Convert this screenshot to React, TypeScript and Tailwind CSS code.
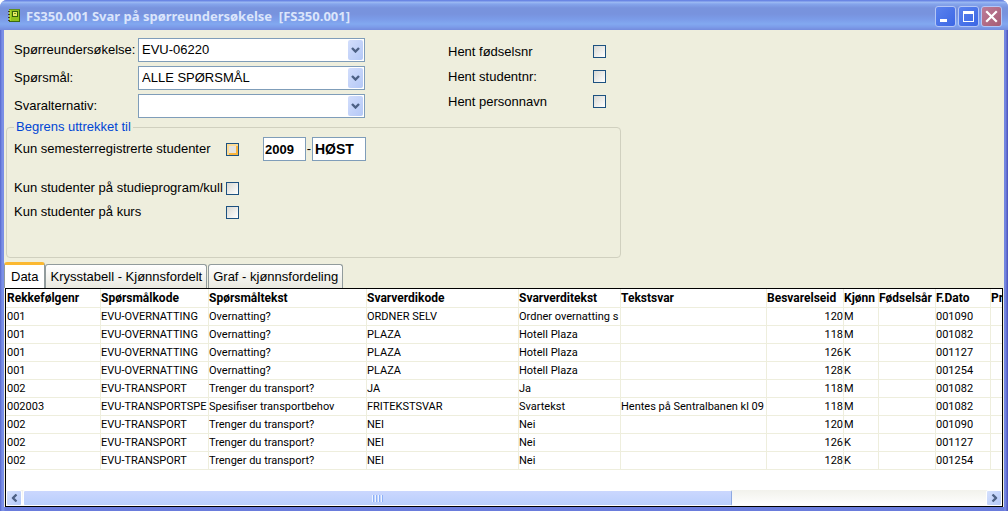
import React, { useState } from "react";

const columns = [
  { name: "Rekkefølgenr", width: "w-[95px]" },
  { name: "Spørsmålkode", width: "w-[108px]" },
  { name: "Spørsmåltekst", width: "w-[158px]" },
  { name: "Svarverdikode", width: "w-[152px]" },
  { name: "Svarverditekst", width: "w-[102px]" },
  { name: "Tekstsvar", width: "w-[146px]" },
  { name: "Besvarelseid", width: "w-[77px]" },
  { name: "Kjønn", width: "w-[35px]" },
  { name: "Fødselsår", width: "w-[57px]" },
  { name: "F.Dato", width: "w-[55px]" },
  { name: "Pr", width: "" },
];

const rows = [
  ["001", "EVU-OVERNATTING", "Overnatting?", "ORDNER SELV", "Ordner overnatting s", "", "120", "M", "", "001090", ""],
  ["001", "EVU-OVERNATTING", "Overnatting?", "PLAZA", "Hotell Plaza", "", "118", "M", "", "001082", ""],
  ["001", "EVU-OVERNATTING", "Overnatting?", "PLAZA", "Hotell Plaza", "", "126", "K", "", "001127", ""],
  ["001", "EVU-OVERNATTING", "Overnatting?", "PLAZA", "Hotell Plaza", "", "128", "K", "", "001254", ""],
  ["002", "EVU-TRANSPORT", "Trenger du transport?", "JA", "Ja", "", "118", "M", "", "001082", ""],
  ["002003", "EVU-TRANSPORTSPE", "Spesifiser transportbehov", "FRITEKSTSVAR", "Svartekst", "Hentes på Sentralbanen kl 09", "118", "M", "", "001082", ""],
  ["002", "EVU-TRANSPORT", "Trenger du transport?", "NEI", "Nei", "", "120", "M", "", "001090", ""],
  ["002", "EVU-TRANSPORT", "Trenger du transport?", "NEI", "Nei", "", "126", "K", "", "001127", ""],
  ["002", "EVU-TRANSPORT", "Trenger du transport?", "NEI", "Nei", "", "128", "K", "", "001254", ""],
];

const tabs = ["Data", "Krysstabell - Kjønnsfordelt", "Graf - kjønnsfordeling"];

function TitleBar() {
  const button =
    "size-[21px] rounded-[3px] border border-[#b4c6f6] flex items-center justify-center";
  return (
    <div className="h-[30px] shrink-0 flex items-center pl-2 pr-[6px] pt-[2px] bg-[linear-gradient(#6a86e4_0px,#6a86e4_1px,#9fbcf3_2px,#85a5ec_4px,#7893dd_8px,#7893de_14px,#7b9be8_19px,#82a8f0_24px,#7c9ce9_27px,#748bdd_30px)]">
      <svg width="13" height="14" viewBox="0 0 13 14" shapeRendering="crispEdges">
        <path d="M1 0h11v1H1z" fill="#5f8d1c" />
        <path d="M1 1h10v11H1z" fill="#8fc21e" />
        <path d="M1 1h2v11H1z" fill="#a9d62c" />
        <path d="M11 1h1v12H11zM1 12h10v1H1z" fill="#3a6a12" />
        <path d="M4 2h6v6H4z" fill="#33630c" />
        <path d="M5 3h4v4H5z" fill="#e9ec62" />
        <path d="M6 4h2v1H6z" fill="#6d9a20" />
        <path d="M0 2h2v1H0zM0 5h2v1H0zM0 8h2v1H0zM0 11h2v1H0z" fill="#4c3f1a" />
      </svg>
      <h1 className="flex-1 pl-[5px] text-[13px] leading-4 font-bold text-[#dbe5fb] whitespace-pre font-['Noto_Sans','Open_Sans',sans-serif]">
        FS350.001 Svar på spørreundersøkelse{"  "}[FS350.001]
      </h1>
      <div className="flex gap-[2px]">
        <button aria-label="Minimer" className={`${button} bg-linear-to-br from-[#5a82ee] to-[#3c66e4]`}>
          <svg width="19" height="19" viewBox="0 0 19 19">
            <path d="M4 12h7v3H4z" fill="#fff" />
          </svg>
        </button>
        <button aria-label="Maksimer" className={`${button} bg-linear-to-br from-[#5a82ee] to-[#3c66e4]`}>
          <svg width="19" height="19" viewBox="0 0 19 19">
            <path d="M4 4h11v11H4zM5 7v7h9V7z" fill="#fff" fillRule="evenodd" />
          </svg>
        </button>
        <button aria-label="Lukk" className={`${button} bg-linear-to-br from-[#bd7c98] to-[#a75c74]`}>
          <svg width="19" height="19" viewBox="0 0 19 19">
            <path d="M5 5l9 9M14 5l-9 9" stroke="#fff" strokeWidth="2.2" strokeLinecap="square" />
          </svg>
        </button>
      </div>
    </div>
  );
}

function Chevron({ className }: { className?: string }) {
  return (
    <svg className={className} width="9" height="6" viewBox="0 0 9 6">
      <path d="M1 1l3.5 3.5L8 1" fill="none" stroke="#4d6185" strokeWidth="2.4" />
    </svg>
  );
}

function SelectRow({ id, label, value }: { id: string; label: string; value: string }) {
  return (
    <>
      <label htmlFor={id}>{label}</label>
      <div className="relative">
        <select
          id={id}
          defaultValue={value}
          className="appearance-none block w-full h-6 px-[3px] bg-white border border-[#7f9db9] text-[13px]"
        >
          <option>{value}</option>
        </select>
        <span className="absolute right-[2px] top-[2px] h-5 w-[15px] rounded-[2px] bg-linear-to-br from-[#d3defc] to-[#b4c8f6] flex items-center justify-center pointer-events-none">
          <Chevron />
        </span>
      </div>
    </>
  );
}

function CheckBox({ id, hot }: { id: string; hot?: boolean }) {
  return (
    <input
      id={id}
      type="checkbox"
      className={`appearance-none block size-[13px] shrink-0 border border-[#1c5180] ${
        hot
          ? "bg-[#e4e3e0] shadow-[inset_1px_1px_0_1px_#fddb94,inset_0_0_0_2px_#f9b43c]"
          : "bg-linear-to-br from-[#d9d9d3] to-white"
      }`}
    />
  );
}

function DataTable() {
  return (
    <table className="table-fixed w-full border-separate border-spacing-0 text-[11px] leading-4 whitespace-nowrap font-[Roboto,Arial,sans-serif]">
      <colgroup>
        {columns.map((c) => (
          <col key={c.name} className={c.width} />
        ))}
      </colgroup>
      <thead>
        <tr className="h-[19px] text-[12px] text-left">
          {columns.map((c) => (
            <th key={c.name} className="p-0 first:pl-px border-r border-b border-[#eeeedd] last:border-r-0">
              {c.name}
            </th>
          ))}
        </tr>
      </thead>
      <tbody>
        {rows.map((row, i) => (
          <tr key={i} className="h-[18px]">
            {row.map((cell, j) => (
              <td
                key={j}
                className={`p-0 pt-px first:pl-px overflow-hidden border-r border-b border-[#eeeedd] last:border-r-0 ${
                  j === 6 ? "text-right" : ""
                }`}
              >
                {cell}
              </td>
            ))}
          </tr>
        ))}
      </tbody>
    </table>
  );
}

function ScrollBar() {
  const arrow =
    "w-4 rounded-[2px] border border-white bg-linear-to-br from-[#d6e1fd] to-[#b3c8f8] flex items-center justify-center";
  return (
    <div className="h-4 shrink-0 flex bg-linear-to-b from-[#f2f2ec] to-white">
      <button aria-label="Rull til venstre" className={arrow}>
        <Chevron className="rotate-90" />
      </button>
      <div className="flex-1 grid grid-cols-[14fr_5fr] px-px">
        <div className="rounded-[2px] border border-white border-r-[#8ea9e2] bg-linear-to-b from-[#cbd7fe] to-[#b9cffc] flex items-center justify-center gap-px">
          {[0, 1, 2, 3].map((n) => (
            <span key={n} className="w-px h-[7px] bg-[#8cb0f8] border-l border-[#eef4fe] box-content" />
          ))}
        </div>
      </div>
      <button aria-label="Rull til høyre" className={arrow}>
        <Chevron className="-rotate-90" />
      </button>
    </div>
  );
}

export default function App() {
  const [active, setActive] = useState(0);

  return (
    <div className="bg-white">
      <div className="min-h-screen flex flex-col rounded-t-[7px] overflow-hidden bg-[#6b7fdd] text-[13px] leading-4 text-black font-['Liberation_Sans',Arial,sans-serif]">
        <TitleBar />
        <div className="flex-1 flex flex-col px-1 pb-1 bg-[linear-gradient(90deg,#5566cc_0px,#7a8fe6_2px,#7a8fe6_4px,#6a7cdc_5px,#6a7cdc_calc(100%-4px),#7a8fe6_calc(100%-3px),#4a50b8_100%)]">
          <div className="flex-1 flex flex-col bg-[#eeeedd]">
            <div className="flex items-start gap-[83px] pt-2 pl-[10px]">
              <div className="grid grid-cols-[124px_227px] gap-y-1 items-center">
                <SelectRow id="undersokelse" label="Spørreundersøkelse:" value="EVU-06220" />
                <SelectRow id="sporsmal" label="Spørsmål:" value="ALLE SPØRSMÅL" />
                <SelectRow id="svar" label="Svaralternativ:" value="" />
              </div>
              <div className="grid grid-cols-[145px_13px] auto-rows-[25px] items-center pt-px">
                <label htmlFor="fnr">Hent fødselsnr</label>
                <CheckBox id="fnr" />
                <label htmlFor="snr">Hent studentnr:</label>
                <CheckBox id="snr" />
                <label htmlFor="navn">Hent personnavn</label>
                <CheckBox id="navn" />
              </div>
            </div>

            <fieldset className="mt-px ml-[2px] w-full max-w-[615px] border border-[#d0d0bf] rounded-[4px] px-[7px] pb-[33px]">
              <legend className="px-[2px] text-[#0046d5]">Begrens uttrekket til</legend>
              <div className="flex items-center h-7">
                <label htmlFor="semester" className="w-[212px]">
                  Kun semesterregistrerte studenter
                </label>
                <CheckBox id="semester" hot />
                <div className="flex items-center pl-6">
                  <input
                    aria-label="År"
                    defaultValue="2009"
                    className="w-[43px] h-6 px-px bg-white border border-[#7f9db9] text-[13px] font-bold"
                  />
                  <span className="w-[6px] text-center">-</span>
                  <input
                    aria-label="Termin"
                    defaultValue="HØST"
                    className="w-[54px] h-6 px-[2px] bg-white border border-[#7f9db9] text-[14px] font-bold"
                  />
                </div>
              </div>
              <div className="grid grid-cols-[212px_13px] auto-rows-[24px] items-center pt-[13px]">
                <label htmlFor="program" className="whitespace-nowrap">
                  Kun studenter på studieprogram/kull
                </label>
                <CheckBox id="program" />
                <label htmlFor="kurs">Kun studenter på kurs</label>
                <CheckBox id="kurs" />
              </div>
            </fieldset>

            <div role="tablist" className="flex items-end mt-1">
              {tabs.map((tab, i) => (
                <button
                  key={tab}
                  role="tab"
                  aria-selected={i === active}
                  onClick={() => setActive(i)}
                  className={
                    i === active
                      ? "h-[26px] px-[6px] rounded-t-[3px] bg-white border-x border-[#919b9c] border-t-[3px] border-t-[#fbb831]"
                      : "h-6 px-[4px] mr-px rounded-t-[3px] bg-linear-to-b from-white to-[#e9e9e0] border border-b-0 border-[#919b9c]"
                  }
                >
                  {tab}
                </button>
              ))}
            </div>

            <div className="flex-1 flex flex-col mx-px border border-black bg-white overflow-hidden">
              <div className="flex-1 overflow-hidden">
                <DataTable />
              </div>
              <ScrollBar />
            </div>
          </div>
        </div>
      </div>
    </div>
  );
}
